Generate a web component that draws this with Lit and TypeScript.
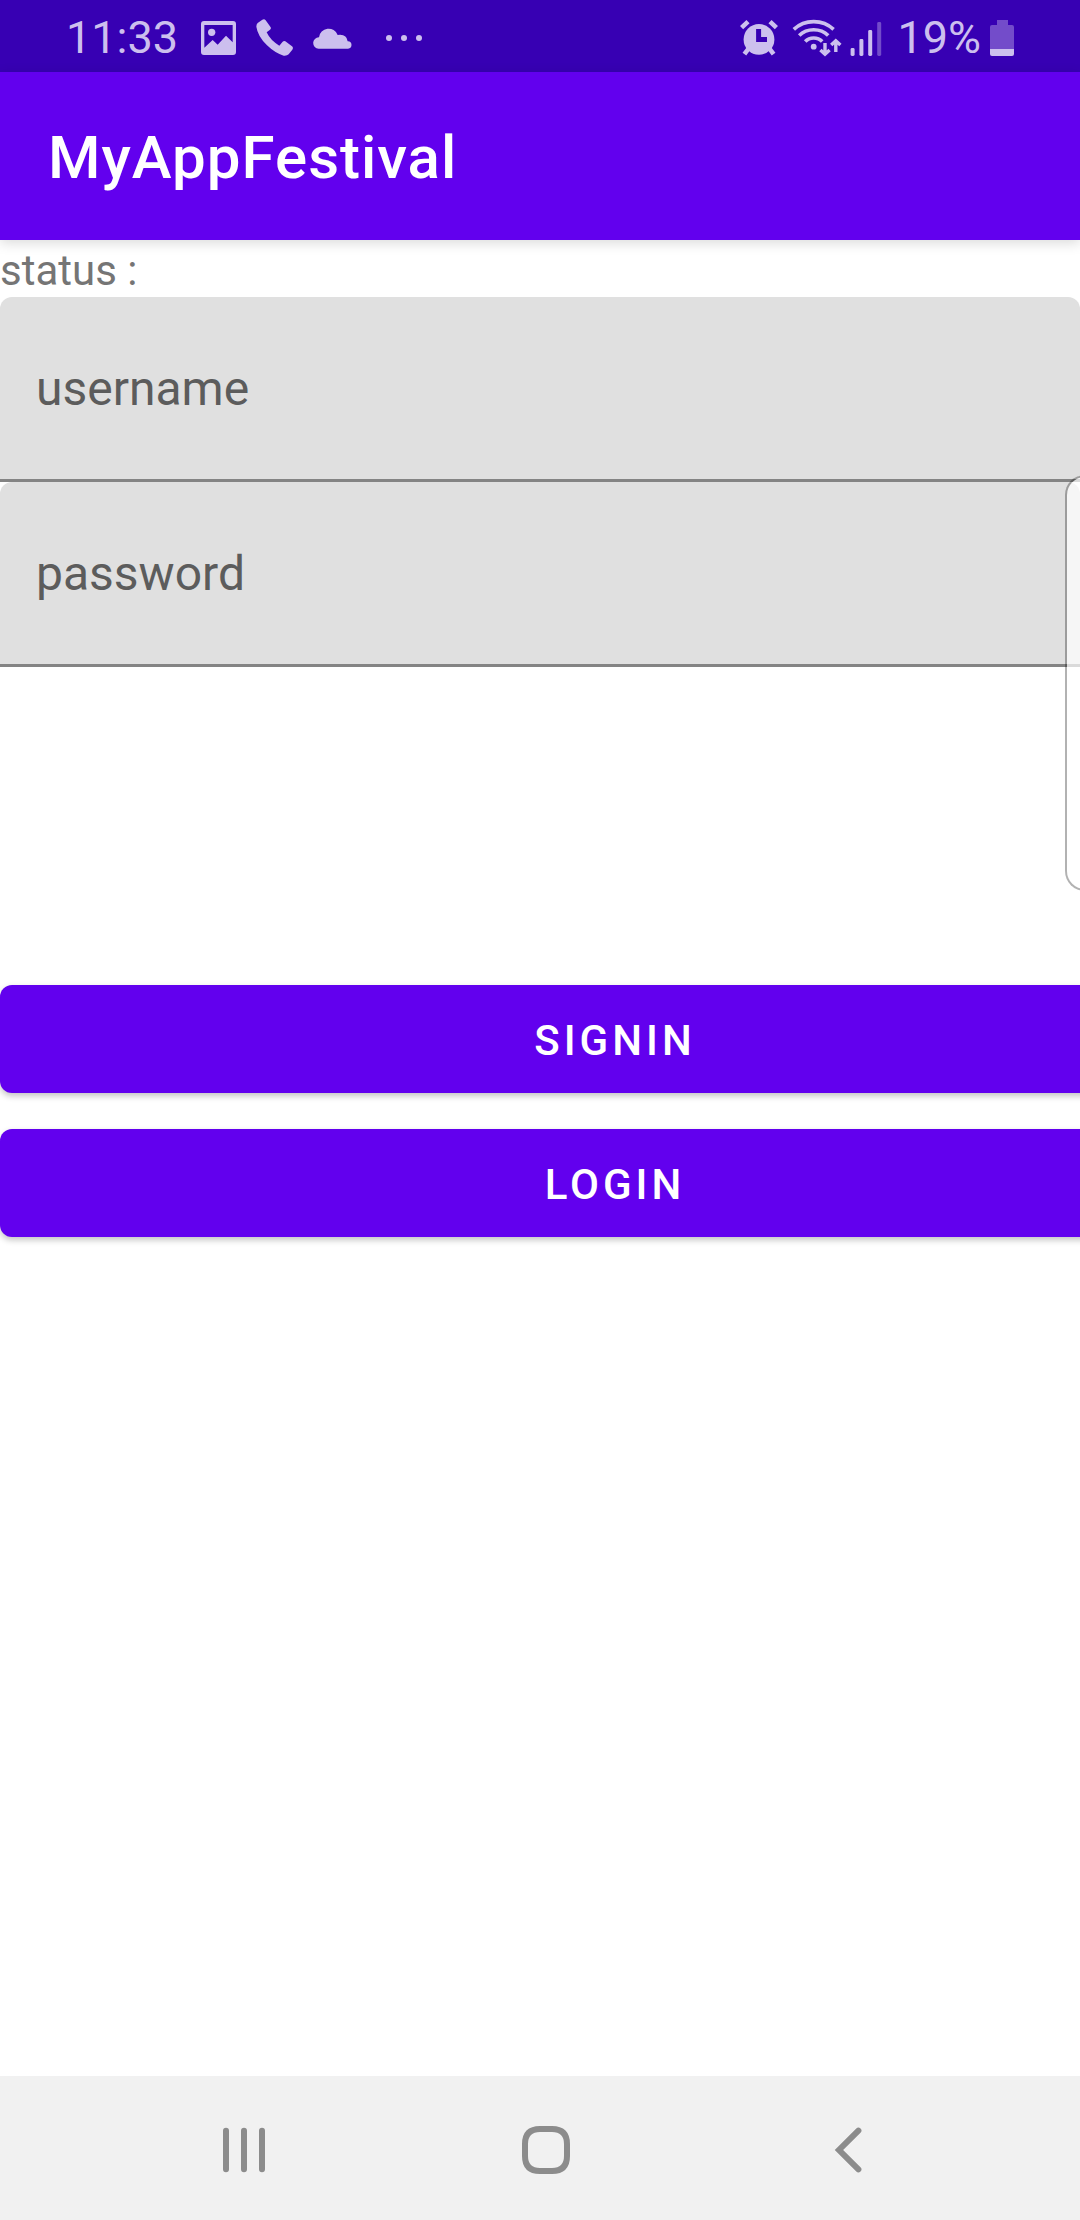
import { LitElement, html, css, svg } from "lit";
import { customElement } from "lit/decorators.js";

@customElement("status-bar")
export class StatusBar extends LitElement {
  static styles = css`
    :host {
      display: flex;
      align-items: center;
      justify-content: space-between;
      box-sizing: border-box;
      height: 72px;
      padding: 3px 66px 0;
      background: #3700b3;
      color: #ccbfee;
      font: 400 45px/52px Roboto, sans-serif;
    }
    .group {
      display: flex;
      align-items: center;
    }
    svg {
      display: block;
      fill: currentColor;
    }
    .notices {
      gap: 20px;
    }
    .clock {
      padding-right: 3px;
    }
    .system {
      gap: 7px;
    }
    .alarm {
      padding-right: 6px;
    }
    .level {
      padding: 0 2px 0 8px;
    }
    .more {
      padding-left: 14px;
    }
    .dim {
      opacity: 0.4;
    }
    .stroke {
      fill: none;
      stroke: currentColor;
    }
    .hole {
      stroke: #3700b3;
      fill: none;
    }
  `;

  render() {
    return html`
      <div class="group notices">
        <span class="clock">11:33</span>
        <svg width="35" height="34" viewBox="450 60 105 102" role="img" aria-label="Picture">
          <path fill-rule="evenodd" d="M459 60H546Q555 60 555 69V153Q555 162 546 162H459Q450 162 450 153V69Q450 60 459 60ZM460 72V140L485 117L500 131L525 104L545 124V72Z" />
          <circle cx="482" cy="94" r="11" />
        </svg>
        <svg width="37" height="37" viewBox="617 57 111 111" role="img" aria-label="Call">
          <path d="M622 69L636 59Q642 55 646 61L661 82Q663 86 659 89L649 97Q660 121 687 137L697 125Q701 121 705 124L725 139Q730 143 726 149L715 163Q710 168 700 167Q675 160 650 136Q622 108 618 80Q618 73 622 69Z" />
        </svg>
        <svg width="39" height="22" viewBox="786 75 117 66" role="img" aria-label="Cloud">
          <path d="M803 140A17 17 0 0 1 804 106A29 29 0 0 1 860 99Q887 95 890 118A11 11 0 0 1 891 140Z" />
        </svg>
        <svg class="more" width="36" height="6" viewBox="0 0 36 6" role="img" aria-label="More notifications">
          <circle cx="3" cy="3" r="3" /><circle cx="18" cy="3" r="3" /><circle cx="33" cy="3" r="3" />
        </svg>
      </div>
      <div class="group system">
        <svg class="alarm" width="40" height="37" viewBox="740 18 40 37" role="img" aria-label="Alarm">
          <circle cx="760" cy="38.4" r="15.4" />
          <path class="stroke" stroke-width="4.6" d="M742.6 26.6L749 20.6M777.4 26.6L771 20.6M750 47L745.4 53.2M770 47L774.6 53.2" />
          <path class="hole" stroke-width="5" d="M759.6 28V38.4H768" />
        </svg>
        <svg width="51" height="38" viewBox="793 18 51 38" role="img" aria-label="Wi-Fi">
          <g class="stroke" stroke-width="3.6">
            <path d="M794.8 28.4Q803 20.6 814.7 20.6T834.6 28.4" />
            <path d="M800.2 34.6Q806 28.8 814.7 28.8T829.2 34.6" />
            <path d="M806.2 40.6Q809.6 37 814.7 37T823.2 40.6" />
            <path stroke-width="3.4" d="M826 42V52.5M821.4 49L826 53.2L830.6 49M836.8 51V40.5M832.2 44L836.8 39.8L841.4 44" />
          </g>
          <circle cx="814.7" cy="45.7" r="2.9" />
        </svg>
        <svg width="32" height="38" viewBox="851 18 32 38" role="img" aria-label="Signal">
          <rect x="851.6" y="47" width="4" height="8" rx="1.4" />
          <rect x="860.4" y="38" width="4" height="17" rx="1.4" />
          <rect x="869.2" y="29" width="4" height="26" rx="1.4" />
          <rect class="dim" x="878.2" y="21" width="4" height="34" rx="1.4" />
        </svg>
        <span class="level">19%</span>
        <svg width="24" height="36" viewBox="0 0 24 36" role="img" aria-label="Battery">
          <path class="dim" d="M7 0H18V5H22Q24 5 24 7V29H0V7Q0 5 2 5H7Z" />
          <path d="M0 29H24V34Q24 36 22 36H2Q0 36 0 34Z" />
        </svg>
      </div>
    `;
  }
}

@customElement("nav-bar")
export class NavBar extends LitElement {
  static styles = css`
    :host {
      display: grid;
      grid-template-columns: repeat(3, 1fr);
      box-sizing: border-box;
      height: 144px;
      padding: 4px 81px 0 93px;
      background: #f1f1f1;
    }
    .key {
      display: grid;
      place-items: center;
      margin: 0;
      padding: 0;
      border: 0;
      background: none;
    }
    .icon {
      display: block;
      fill: none;
      stroke: #8c8c8c;
      stroke-width: 6;
      stroke-linecap: round;
    }
  `;

  private keys = [
    { name: "Recents", shape: svg`<path d="M6 4.8V43.2M24 4.8V43.2M42 4.8V43.2" />` },
    { name: "Home", shape: svg`<path d="M18 3H30Q45 3 45 18V30Q45 45 30 45H18Q3 45 3 30V18Q3 3 18 3Z" />` },
    { name: "Back", shape: svg`<path d="M34.4 4.6L15 24L34.4 43.4" />` },
  ];

  render() {
    return this.keys.map(
      (k) => html`
        <button class="key" aria-label=${k.name}>
          <svg class="icon" width="48" height="48" viewBox="0 0 48 48">${k.shape}</svg>
        </button>
      `
    );
  }
}

@customElement("app-root")
export class AppRoot extends LitElement {
  static styles = css`
    :host {
      display: flex;
      flex-direction: column;
      position: relative;
      min-height: 100vh;
      overflow: hidden;
      background: #fff;
      font-family: Roboto, sans-serif;
    }
    .bar {
      display: flex;
      align-items: center;
      box-sizing: border-box;
      height: 168px;
      padding: 4px 48px 0;
      background: #6200ee;
      box-shadow: 0 3px 12px rgba(0, 0, 0, 0.15);
    }
    .title {
      margin: 0;
      color: #fff;
      font-size: 60px;
      font-weight: 500;
      line-height: 72px;
      letter-spacing: 1px;
    }
    .content {
      flex: 1;
    }
    .status {
      margin: 0;
      padding-top: 4px;
      color: #757575;
      font-size: 42px;
      line-height: 53px;
    }
    .field {
      display: block;
      box-sizing: border-box;
      width: 100%;
      height: 185px;
      margin: 0;
      padding: 0 36px 3px;
      border: 0;
      border-radius: 12px 12px 0 0;
      background: linear-gradient(#848484, #848484) bottom / 100% 3px no-repeat #e0e0e0;
      color: #212121;
      font: 400 48px/56px Roboto, sans-serif;
      outline: none;
    }
    .field::placeholder {
      color: #5c5c5c;
      opacity: 1;
    }
    .actions {
      display: grid;
      gap: 36px;
      width: calc(100% + 150px);
      padding-top: 318px;
    }
    .action {
      height: 108px;
      margin: 0;
      padding: 3px 0 0;
      border: 0;
      border-radius: 12px;
      background: #6200ee;
      box-shadow: 0 3px 6px rgba(0, 0, 0, 0.24);
      color: #fff;
      font: 500 42px/48px Roboto, sans-serif;
      letter-spacing: 4px;
      text-transform: uppercase;
    }
    .edge-panel {
      position: absolute;
      top: 475px;
      right: -9px;
      box-sizing: border-box;
      width: 24px;
      height: 416px;
      border: 2px solid rgba(0, 0, 0, 0.3);
      border-right: 0;
      border-radius: 20px 0 0 20px;
      background: rgba(255, 255, 255, 0.7);
      background-clip: padding-box;
    }
  `;

  render() {
    return html`
      <status-bar></status-bar>
      <header class="bar"><h1 class="title">MyAppFestival</h1></header>
      <main class="content">
        <p class="status">status :</p>
        <form @submit=${(e: Event) => e.preventDefault()}>
          <input class="field" type="text" name="username" placeholder="username" aria-label="username" />
          <input class="field" type="password" name="password" placeholder="password" aria-label="password" />
          <div class="actions">
            <button class="action" type="button">Signin</button>
            <button class="action" type="submit">Login</button>
          </div>
        </form>
      </main>
      <nav-bar role="navigation"></nav-bar>
      <div class="edge-panel"></div>
    `;
  }
}
